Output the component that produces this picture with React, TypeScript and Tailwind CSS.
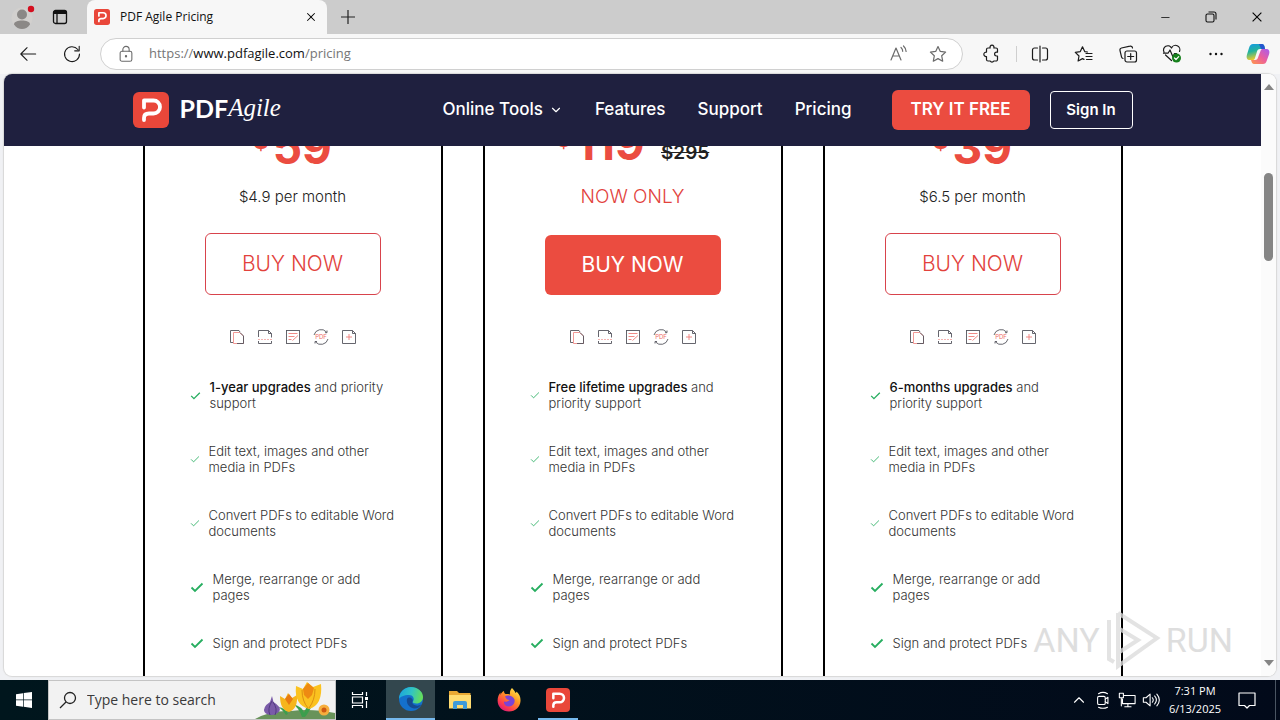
import React from "react";
import {
  VscChromeClose,
  VscChromeMinimize,
} from "react-icons/vsc";
import { FiChevronDown, FiChevronUp } from "react-icons/fi";

type Feature = { bold?: string; text: string; check: "sm" | "md" | "lg" };

type Plan = {
  name: string;
  price: string;
  oldPrice?: string;
  note: string;
  featured?: boolean;
  features: Feature[];
};

const commonFeatures: Feature[] = [
  { text: "Edit text, images and other\nmedia in PDFs", check: "sm" },
  { text: "Convert PDFs to editable Word\ndocuments", check: "sm" },
  { text: "Merge, rearrange or add\npages", check: "lg" },
  { text: "Sign and protect PDFs", check: "lg" },
];

const plans: Plan[] = [
  {
    name: "annual",
    price: "59",
    note: "$4.9 per month",
    features: [
      { bold: "1-year upgrades", text: " and priority\nsupport", check: "md" },
      ...commonFeatures,
    ],
  },
  {
    name: "lifetime",
    price: "119",
    oldPrice: "$295",
    note: "NOW ONLY",
    featured: true,
    features: [
      { bold: "Free lifetime upgrades", text: " and\npriority support", check: "sm" },
      ...commonFeatures,
    ],
  },
  {
    name: "half-year",
    price: "39",
    note: "$6.5 per month",
    features: [
      { bold: "6-months upgrades", text: " and\npriority support", check: "md" },
      ...commonFeatures,
    ],
  },
];

const checkSizes = {
  sm: "w-[10px] h-[10px] stroke-[1.2]",
  md: "w-[11px] h-[11px] stroke-[1.7]",
  lg: "w-[14px] h-[14px] stroke-[1.8]",
};

function AgileMark({ className }: { className: string }) {
  return (
    <svg viewBox="0 0 36 36" className={className} aria-hidden="true">
      <rect width="36" height="36" rx="6" fill="#e9473a" />
      <path
        d="M11 15.500V8.500h9.500a6.500 6.500 0 0 1 0 13H16q-5 0-5 4.500v2"
        fill="none"
        stroke="#fff"
        strokeWidth="3.800"
        strokeLinecap="round"
        strokeLinejoin="round"
      />
    </svg>
  );
}

function Icon({
  size = 20,
  children,
}: {
  size?: number;
  children: React.ReactNode;
}) {
  return (
    <svg
      width={size}
      height={size}
      viewBox="0 0 20 20"
      fill="none"
      stroke="currentColor"
      strokeWidth="1.2"
      strokeLinecap="round"
      strokeLinejoin="round"
      aria-hidden="true"
    >
      {children}
    </svg>
  );
}

function ToolButton({
  label,
  children,
}: {
  label: string;
  children: React.ReactNode;
}) {
  return (
    <button
      aria-label={label}
      className="flex h-8 w-11 shrink-0 items-center justify-center text-[#1b1b1b]"
    >
      {children}
    </button>
  );
}

function TabStrip() {
  return (
    <div className="flex h-[34px] shrink-0 items-center bg-[#cccccc]">
      <button aria-label="Profile" className="flex w-11 justify-center">
        <svg width="26" height="26" viewBox="0 0 26 26">
          <circle cx="13" cy="14" r="10.5" fill="#d2d0ce" />
          <circle cx="13" cy="10.500" r="5" fill="#8b8886" />
          <path d="M5 20.500c0-3 4-4 8-4s8 1 8 4c-2 3-5 4.500-8 4.500s-6-1.500-8-4.500z" fill="#8b8886" />
          <circle cx="22" cy="5" r="3.200" fill="#d40f1f" />
        </svg>
      </button>
      <button aria-label="Tab actions" className="flex w-8 justify-center">
        <svg width="16" height="16" viewBox="0 0 16 16" fill="none" stroke="#111">
          <rect x="1.500" y="1.500" width="13" height="13" rx="2" strokeWidth="1.300" />
          <path d="M1.500 3.500h13" strokeWidth="3" />
          <path d="M5 3v11.500" strokeWidth="1.300" />
        </svg>
      </button>
      <div className="ml-[11px] flex h-full w-60 items-center rounded-t-lg bg-[#f7f7f7] pr-2 pl-[7px]">
        <AgileMark className="h-4 w-4" />
        <span className="ml-2.5 flex-1 text-xs text-[#111]">PDF Agile Pricing</span>
        <button aria-label="Close tab" className="p-0.5">
          <VscChromeClose size={12} />
        </button>
      </div>
      <button aria-label="New tab" className="flex w-[42px] justify-center text-[#222]">
        <svg width="14" height="14" viewBox="0 0 14 14" stroke="currentColor" strokeWidth="1.200">
          <path d="M7 0v14M0 7h14" />
        </svg>
      </button>
      <div className="ml-auto flex h-full items-center">
        <button aria-label="Minimize" className="flex w-[46px] justify-center">
          <VscChromeMinimize size={12} />
        </button>
        <button aria-label="Restore" className="flex w-[46px] justify-center">
          <svg width="12" height="12" viewBox="0 0 12 12" fill="none" stroke="#111" strokeWidth="1.100">
            <rect x="1" y="3" width="8" height="8" rx="1.500" />
            <path d="M3.500 1h5.500a2 2 0 0 1 2 2v5.500" />
          </svg>
        </button>
        <button aria-label="Close" className="flex w-[46px] justify-center">
          <VscChromeClose size={14} />
        </button>
      </div>
    </div>
  );
}

function Toolbar() {
  return (
    <div className="flex h-10 shrink-0 items-center bg-[#f7f7f7] pr-0.5 pl-1.5">
      <ToolButton label="Back">
        <Icon size={18}>
          <path d="M18.500 10H2M9 3L2 10l7 7" />
        </Icon>
      </ToolButton>
      <ToolButton label="Refresh">
        <Icon size={18}>
          <path d="M18.300 10a8.300 8.300 0 1 1-1.800-5M18 1.500v5h-5" />
        </Icon>
      </ToolButton>
      <div className="ml-1.5 flex h-8 flex-1 items-center rounded-full border border-[#d0d0d0] bg-white pr-3.5 pl-4 text-[#6b6b6b]">
        <Icon size={18}>
          <rect x="3.500" y="7" width="13" height="11" rx="2" />
          <path d="M6.500 7V5a3.500 3.500 0 0 1 7 0v2" />
          <circle cx="10" cy="12.500" r=".7" fill="currentColor" />
        </Icon>
        <a href="#pricing" className="ml-3.5 flex-1 text-[13px] text-[#767676]">
          https://<span className="text-[#111]">www.pdfagile.com</span>/pricing
        </a>
        <button aria-label="Read aloud" className="mr-5">
          <Icon>
            <path d="M3 16L8 4l5 12M4.800 12h6.400M13 3.500a5 5 0 0 1 1.700 3.800M15.500 2a8 8 0 0 1 2.600 5.500" />
          </Icon>
        </button>
        <button aria-label="Add to favorites">
          <Icon>
            <path d="M10 2.500l2.300 4.900 5.300.7-3.900 3.700 1 5.400-4.700-2.600-4.700 2.600 1-5.400-3.900-3.700 5.300-.7z" />
          </Icon>
        </button>
      </div>
      <div className="ml-[7px] flex items-center">
        <ToolButton label="Extensions">
          <Icon>
            <path d="M6 4h2.200a2 2 0 1 1 3.600 0H14a1.500 1.500 0 0 1 1.500 1.500v2.700h-1a1.900 1.900 0 0 0 0 3.800h1v3.500A1.500 1.500 0 0 1 14 17h-2.200a2 2 0 0 1-3.600 0H6a1.500 1.500 0 0 1-1.500-1.500V12.500a2.200 2.200 0 1 1 0-4.300V5.500A1.500 1.500 0 0 1 6 4z" />
          </Icon>
        </ToolButton>
        <div className="flex w-1 justify-center">
          <div className="h-4 w-px bg-[#cfcfcf]" />
        </div>
        <ToolButton label="Split screen">
          <Icon>
            <path d="M10 2v16M7.500 4H4.500a2 2 0 0 0-2 2v8a2 2 0 0 0 2 2h3M12.500 4h3a2 2 0 0 1 2 2v8a2 2 0 0 1-2 2h-3" />
          </Icon>
        </ToolButton>
        <ToolButton label="Favorites">
          <Icon>
            <path d="M13.500 8l-2.800-.4L8.500 2.800 6.300 7.600l-5 .7L5 12l-.9 5 4.400-2.400 1.500.8M12 9.500h6M12 12.500h6M12.500 15.500h5.500" />
          </Icon>
        </ToolButton>
        <ToolButton label="Collections">
          <Icon>
            <rect x="7" y="7" width="11.500" height="11" rx="2" />
            <path d="M12.700 9.500v6M9.700 12.500h6M5 14.500a2 2 0 0 1-1.500-1.600L2 6.500A2 2 0 0 1 3.500 4l8.500-1.800A2 2 0 0 1 14.500 4" />
          </Icon>
        </ToolButton>
        <ToolButton label="Browser essentials">
          <Icon>
            <path d="M9.500 16.500L3.500 11M2 8a4.200 4.200 0 0 1 7.500-4 4.200 4.200 0 0 1 8 3.500M1.500 9.200H6L8 6l3 7 1.500-3.500h2" />
            <circle cx="14.500" cy="14" r="4.500" fill="#16801c" stroke="none" />
            <path d="M12.500 14l1.500 1.500 2.700-2.800" stroke="#fff" />
          </Icon>
        </ToolButton>
        <ToolButton label="Settings and more">
          <svg width="16" height="4" viewBox="0 0 16 4" fill="#111">
            <circle cx="2.500" cy="2" r="1.200" />
            <circle cx="8" cy="2" r="1.200" />
            <circle cx="13.500" cy="2" r="1.200" />
          </svg>
        </ToolButton>
        <button aria-label="Copilot" className="flex w-10 justify-center">
          <svg width="24" height="24" viewBox="0 0 24 24">
            <defs>
              <linearGradient id="cpA" x1="0" y1="0" x2="0.300" y2="1">
                <stop offset="0" stopColor="#1397ea" />
                <stop offset=".5" stopColor="#25b49b" />
                <stop offset="1" stopColor="#f2cb2b" />
              </linearGradient>
              <linearGradient id="cpB" x1="1" y1="0" x2="0" y2="1">
                <stop offset="0" stopColor="#a75cf0" />
                <stop offset=".5" stopColor="#ec5f9b" />
                <stop offset="1" stopColor="#ff9a4a" />
              </linearGradient>
            </defs>
            <path d="M7 2h9c1.500 0 2 1 2.500 2.500L19 7h-5c-2 0-2.500 1-3 2.500L9 16c-.5 1.500-1 2-2.500 2H4c-3 0-4-2-3-5.500L3 6c1-3 2-4 4-4z" fill="url(#cpA)" />
            <path d="M13 2h3c1.500 0 2 1 2.500 2.500L19 7h-4z" fill="#2456cf" />
            <path d="M17 22H8c-1.500 0-2-1-2.500-2.500L5 18h4c2 0 2.500-1 3-2.500L14.500 9c.5-1.500 1-2 2.500-2h3c3 0 4 2 3 5.500L21 18c-1 3-2 4-4 4z" fill="url(#cpB)" />
          </svg>
        </button>
      </div>
    </div>
  );
}

function SiteHeader() {
  return (
    <header className="z-10 h-[72px] shrink-0 bg-[#1f203f] text-white">
      <div className="mx-auto flex h-full w-full max-w-[1000px] items-center">
        <a href="#home" className="flex items-center">
          <AgileMark className="h-9 w-9" />
          <span className="ml-[11px] pb-1 font-[Lato] text-[25px] leading-8 font-bold">PDF</span>
          <span className="pb-1 font-['Liberation_Serif'] text-[25px] leading-8 italic">Agile</span>
        </a>
        <nav className="ml-auto flex items-center gap-8 text-[17px] font-medium">
          <a href="#tools" className="flex items-center gap-1.5">
            Online Tools <FiChevronDown size={14} />
          </a>
          <a href="#features">Features</a>
          <a href="#support">Support</a>
          <a href="#pricing">Pricing</a>
        </nav>
        <button className="ml-10 h-10 w-[138px] rounded-md bg-[#eb4c40] text-[17px] font-semibold">
          TRY IT FREE
        </button>
        <button className="ml-5 h-[38px] w-[83px] rounded border border-white text-[15px] font-semibold">
          Sign In
        </button>
      </div>
    </header>
  );
}

function FormatIcons() {
  return (
    <div className="flex justify-center gap-3">
      <svg width="16" height="16" viewBox="0 0 16 16" fill="none" stroke="#55555d" strokeWidth=".9">
        <path d="M4 13.500H1.500v-12H10l1 1.500" />
        <path d="M4.500 3.500h6l4 3.500v7.500h-10z" stroke="#ef8d8a" />
        <path d="M11 3.500l3.500 3.500v7.500H8" />
      </svg>
      <svg width="16" height="16" viewBox="0 0 16 16" fill="none" stroke="#55555d" strokeWidth=".9">
        <path d="M1.500 8V1.500h10L14.500 4.500v4M1.500 12v2.500h13V12M11.500 1.500v3h3" />
        <path d="M1 10.500h14" stroke="#f3aaa8" strokeDasharray="2 1" />
      </svg>
      <svg width="16" height="16" viewBox="0 0 16 16" fill="none" stroke="#55555d" strokeWidth=".9">
        <rect x="1.500" y="1.500" width="13" height="13" />
        <path d="M3.500 4.500h9M3.500 7.500h6M3.500 10.500h3M7.500 11.500l5.500-5" stroke="#ee7d78" />
      </svg>
      <svg width="16" height="16" viewBox="0 0 16 16" fill="none" stroke="#55555d" strokeWidth=".9">
        <path d="M1 6A7.300 7.300 0 0 1 13.500 3M15 10A7.300 7.300 0 0 1 2.500 13M14 1.500V3.700H12M2 14.500V12.500H4" />
        <text x="8" y="10.200" textAnchor="middle" fontSize="6" fill="#ee6d68" stroke="none">PDF</text>
      </svg>
      <svg width="16" height="16" viewBox="0 0 16 16" fill="none" stroke="#55555d" strokeWidth=".9">
        <path d="M1.500 1.500h10l3 3v10h-13zM11.500 1.500v3h3" />
        <path d="M8 5v6M5 8h6" stroke="#ee7d78" />
      </svg>
    </div>
  );
}

function PlanCard({ plan }: { plan: Plan }) {
  return (
    <article className="flex flex-col items-center border-x-2 border-black">
      <div
        className={
          plan.featured
            ? "flex h-[61px] items-end pb-1 font-bold text-[#eb4c40]"
            : "flex h-[61px] items-end font-bold text-[#eb4c40]"
        }
      >
        <span className="self-center text-2xl leading-6">$</span>
        <span className="ml-1 text-[46px] leading-[48px]">{plan.price}</span>
        {plan.oldPrice ? (
          <del className="ml-4 text-[19px] leading-7 font-semibold text-[#222]">
            {plan.oldPrice}
          </del>
        ) : null}
      </div>
      <p
        className={
          plan.featured
            ? "mt-3.5 text-[19px] leading-6 font-light text-[#e2423c]"
            : "mt-3.5 text-[15px] leading-6 font-light text-[#222]"
        }
      >
        {plan.note}
      </p>
      <div className="mt-6 flex h-[62px] items-end">
        <button
          className={
            plan.featured
              ? "h-[60px] w-44 rounded-md bg-[#eb4c40] text-[21px] text-white"
              : "h-[62px] w-44 rounded-md border border-[#d8434c] text-[21px] font-light text-[#e2423c]"
          }
        >
          BUY NOW
        </button>
      </div>
      <div className="mt-[34px]">
        <FormatIcons />
      </div>
      <ul className="mt-[34px] flex w-full flex-col gap-8 pl-[45px]">
        {plan.features.map((feature) => (
          <li key={feature.text} className="flex items-center gap-[9px]">
            <svg
              viewBox="0 0 14 14"
              fill="none"
              stroke="#27ae60"
              className={checkSizes[feature.check]}
            >
              <path d="M1.500 7.500l3.500 3.500 7.500-7.500" />
            </svg>
            <p className="text-[13px] leading-4 font-light whitespace-pre text-[#333]">
              {feature.bold ? (
                <b className="font-medium text-[#111]">{feature.bold}</b>
              ) : null}
              {feature.text}
            </p>
          </li>
        ))}
      </ul>
    </article>
  );
}

function Scrollbar() {
  return (
    <div className="flex w-[15px] shrink-0 flex-col items-center bg-[#fbfbfb] py-2.5">
      <svg width="10" height="6" viewBox="0 0 10 6" fill="#858585">
        <path d="M5 0l5 6H0z" />
      </svg>
      <div className="mt-[83px] h-[88px] w-[9px] rounded-full bg-[#858585]" />
      <svg width="10" height="6" viewBox="0 0 10 6" fill="#858585" className="mt-auto">
        <path d="M0 0h10L5 6z" />
      </svg>
    </div>
  );
}

function Watermark() {
  return (
    <div className="absolute right-[43px] bottom-1 flex items-center gap-1 font-[Roboto] text-[34px] leading-[60px] text-[#dedede]">
      <span>ANY</span>
      <svg width="58" height="64" viewBox="0 0 58 64" fill="none" stroke="#dcdcdc" strokeOpacity=".8" strokeWidth="4">
        <path d="M14 5v15M14 5l39 25-39 28V45M5 12v39l5 3M14 20l20 12-20 13z" />
      </svg>
      <span>RUN</span>
    </div>
  );
}

function Taskbar() {
  return (
    <footer className="flex h-10 shrink-0 items-center bg-linear-to-r from-[#00161d] to-[#020a1a] text-white">
      <button aria-label="Start" className="flex w-12 justify-center">
        <svg width="16" height="16" viewBox="0 0 16 16" fill="#fff">
          <path d="M0 2.200l7-1v6.300H0zM7.700 1.100L16 0v7.500H7.700zM0 8.300h7v6.400l-7-1zM7.700 8.300H16V16l-8.300-1.200z" />
        </svg>
      </button>
      <label className="flex h-full w-72 items-center border border-[#c4c4c4] bg-[#f2f2f2] pl-2.5 text-[#222]">
        <svg width="18" height="18" viewBox="0 0 18 18" fill="none" stroke="#222" strokeWidth="1.300">
          <circle cx="11" cy="7" r="5.500" />
          <path d="M7 11l-6 6" />
        </svg>
        <input
          aria-label="Search"
          placeholder="Type here to search"
          className="ml-2.5 w-full min-w-0 flex-1 bg-transparent text-sm outline-none placeholder:text-[#3a3a3a]"
        />
        <svg width="80" height="38" viewBox="0 0 80 38" className="shrink-0">
          <path d="M0 38q16-9 36-8 20-3 44 2v6z" fill="#68935a" />
          <path d="M31 34q-4-6-8-8 8 1 10 7zM47 36q-3-9-9-13 10 3 11 9 3-9 10-12-4 10-9 16z" fill="#3c9e4d" />
          <path d="M17 15l1.500 6q8 5 6 9-3 4-8 4t-7-3q-2-5 5.500-10z" fill="#7a5ba8" />
          <path d="M17 20q-5 8-2 14M18 21q5 7 2 13" stroke="#523b80" fill="none" />
          <path d="M25 15l5 3 3-6 4 5 5-3q1 14-8 17-9-2-9-16z" fill="#f6b51c" />
          <path d="M30 18l4-5 4 5-4 6z" fill="#e87b12" />
          <path d="M41 5l7 3 4-7 6 5 8-3q2 21-12 25Q39 24 41 5z" fill="#fbc21f" />
          <path d="M48 8l5-6 6 5-2 7-4 4-4-4z" fill="#ee8a12" />
          <path d="M47 9q0 11 6 18M60 8q0 11-6 19" stroke="#dc8f12" fill="none" />
          <circle cx="69" cy="29" r="5.500" fill="#f7ae3d" />
          <circle cx="69" cy="29" r="2.500" fill="#cf5a13" />
        </svg>
      </label>
      <button aria-label="Task view" className="mr-0.5 flex w-12 justify-center">
        <svg width="18" height="16" viewBox="0 0 18 16" fill="none" stroke="#fff" strokeWidth="1.200">
          <path d="M1.500 0v2.500h10V0M1.500 16v-2.500h10V16M1.500 5h10v6h-10zM15.500 0v4M15.500 9v7" />
          <path d="M15.500 5v3" strokeWidth="3" />
        </svg>
      </button>
      <button aria-label="Edge" className="flex h-full w-[49px] items-center justify-center border-b-2 border-[#76b9ed] bg-[#33474e]">
        <svg width="24" height="24" viewBox="0 0 24 24">
          <defs>
            <linearGradient id="edgeTop" x1="0" x2="1" y1=".3" y2=".5">
              <stop offset="0" stopColor="#1ba5dc" />
              <stop offset=".5" stopColor="#31c3c4" />
              <stop offset="1" stopColor="#67df56" />
            </linearGradient>
          </defs>
          <circle cx="12" cy="12" r="12" fill="#1470cc" />
          <path d="M0 12C0 5 5.500 0 12 0s12 4.500 12 10c0 4-3 6.500-6.500 6.500-3 0-4-1-3.500-2 2-3 0-6.500-4-6.500C5 8 1 10 0 12z" fill="url(#edgeTop)" />
          <path d="M8 12c-1 4 2 9 7 9.500 3 .3 6-1.500 7.500-4-2.500 1.500-6 1.500-8 0-1.500-1.200-1.500-2.500-.8-3.500C14.500 11.500 10 8.500 8 12z" fill="#154a91" />
        </svg>
      </button>
      <button aria-label="File Explorer" className="flex w-[49px] justify-center">
        <svg width="22" height="18" viewBox="0 0 22 18">
          <path d="M0 0h8l2 2h11.500v15H0z" fill="#e9a934" />
          <path d="M0 4h22v13.500H0z" fill="#ffdc71" />
          <path d="M4 18v-6q0-2 2-2h10q2 0 2 2v6h-4v-4H8v4z" fill="#3f9bda" />
        </svg>
      </button>
      <button aria-label="Firefox" className="flex w-[49px] justify-center">
        <svg width="24" height="24" viewBox="0 0 24 24">
          <defs>
            <linearGradient id="fox" x1=".9" y1="0" x2=".2" y2="1">
              <stop offset="0" stopColor="#fff15a" />
              <stop offset=".4" stopColor="#ff9b21" />
              <stop offset=".75" stopColor="#ff3f4b" />
              <stop offset="1" stopColor="#d5167f" />
            </linearGradient>
          </defs>
          <path d="M15 0c2 2 3 3.500 3.500 5 .8-.4 1-1 1-1.500 3 2.500 4.200 6 4 9.500-.4 6-5 10.500-11.500 10.500S.6 19 .6 12.500C.6 9 2 6 3.500 4.500V7c.8-2 2-3.500 3.500-4 0 1.500.5 2.500 1.500 3 2 0 3.500 0 4.500.5C12.500 4 13.500 1.500 15 0z" fill="url(#fox)" />
          <path d="M8 8.500c3-2 8-.5 9.500 3 .8 4-2 7-5.500 7s-5.500-2.500-5-5c2 .8 4 0 5.500-1.500-2 0-3.500-1-4.500-3.500z" fill="#7b43d6" />
        </svg>
      </button>
      <button aria-label="PDF Agile" className="flex h-full w-[49px] flex-col items-center justify-between pt-2">
        <AgileMark className="h-6 w-6" />
        <span className="h-0.5 w-10 bg-[#76b9ed]" />
      </button>
      <div className="ml-auto flex h-full items-center">
        <button aria-label="Hidden icons" className="flex w-6 justify-center">
          <FiChevronUp size={18} strokeWidth={1.5} />
        </button>
        <button aria-label="Meet now" className="flex w-6 justify-center">
          <Icon size={18}>
            <rect x="4" y="6" width="8.500" height="9" rx="1.500" />
            <path d="M12.500 9l3-2v7l-3-2M5 3q5-3 10 0M5 18q5 2.500 10 0" />
          </Icon>
        </button>
        <button aria-label="Network" className="flex w-6 justify-center">
          <Icon size={18}>
            <path d="M7 5h12v9H5V9M1.500 2.500H6v5H1.500zM3.700 7.500v9M11 14v3.500M7.500 17.500h7" />
          </Icon>
        </button>
        <button aria-label="Volume" className="flex w-6 justify-center">
          <Icon size={18}>
            <path d="M1.500 7.500h3L9 3.500v13l-4.500-4h-3zM11.500 7.500q2 2.500 0 5M14 5.500q4 4.500 0 9M16.500 3.500q5.500 6.500 0 13" />
          </Icon>
        </button>
        <div className="w-16 text-center text-[11px] leading-[18px]">
          <div>7:31 PM</div>
          <div>6/13/2025</div>
        </div>
        <button aria-label="Notifications" className="flex w-10 justify-center">
          <Icon size={20}>
            <path d="M2 3h16v12.500h-5.500L10 18l-2.500-2.500H2z" />
          </Icon>
        </button>
        <div className="ml-2 h-full w-[5px] border-l border-[#4a5562]" />
      </div>
    </footer>
  );
}

export default function App() {
  return (
    <div className="flex h-screen flex-col overflow-hidden bg-[#f0f1f4] font-['Open_Sans','Noto_Sans',sans-serif]">
      <TabStrip />
      <Toolbar />
      <div className="relative mx-1 mb-1 flex min-h-0 flex-1 overflow-hidden rounded-lg bg-white shadow-[0_0_1px_1px_#d8d8d8] font-[Inter,sans-serif]">
        <div className="flex min-w-0 flex-1 flex-col">
          <SiteHeader />
          <main className="min-h-0 flex-1 overflow-hidden">
            <section
              id="pricing"
              className="mx-auto -mt-9 grid h-full min-h-[600px] w-full max-w-[980px] grid-cols-3 gap-10"
            >
              {plans.map((plan) => (
                <PlanCard key={plan.name} plan={plan} />
              ))}
            </section>
          </main>
        </div>
        <Scrollbar />
        <Watermark />
      </div>
      <Taskbar />
    </div>
  );
}
